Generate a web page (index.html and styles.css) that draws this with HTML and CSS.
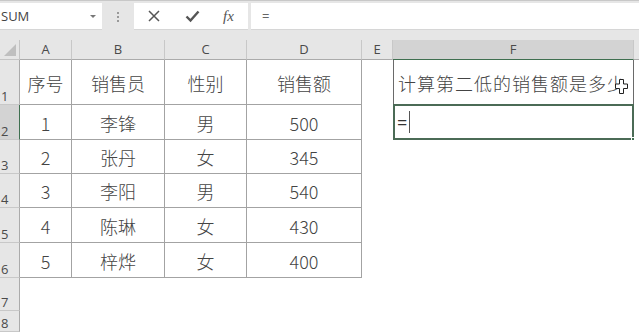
FILE: index.html
```html
<!DOCTYPE html>
<html lang="zh">
<head>
<meta charset="utf-8">
<link rel="stylesheet" href="styles.css">
</head>
<body>
<div class="topbar">
  <div class="namebox"><span class="name">SUM</span><span class="arrow"></span></div>
  <div class="dots"><i></i><i></i><i></i></div>
  <div class="fxbox">
    <svg class="ico" width="14" height="14" viewBox="0 0 14 14"><path d="M2 2 L12 12 M12 2 L2 12" stroke="#555" stroke-width="1.5" fill="none"/></svg>
    <svg class="ico" width="15" height="14" viewBox="0 0 15 14"><path d="M1.5 7.5 L5.5 11.5 L13.5 2.5" stroke="#555" stroke-width="2.4" fill="none"/></svg>
    <span class="fx">fx</span>
  </div>
  <div class="formula">=</div>
</div>
<div class="sheet">
  <div class="corner"><span class="tri"></span></div>
  <div class="ch">A</div><div class="ch">B</div><div class="ch">C</div><div class="ch">D</div><div class="ch">E</div><div class="ch sel">F</div><div class="ch last"></div>

  <div class="rh">1</div>
  <div class="c t">序号</div><div class="c t">销售员</div><div class="c t">性别</div><div class="c t">销售额</div><div class="c"></div>
  <div class="c f1">计算第二低的销售额是多少
    <svg class="cursor" width="13" height="15" viewBox="0 0 13 15"><path d="M4.5 0.5 H8.5 V5 H12.5 V9.5 H8.5 V14.5 H4.5 V9.5 H0.5 V5 H4.5 Z" fill="#fff" stroke="#222" stroke-width="1"/></svg>
  </div><div class="c"></div>

  <div class="rh rsel">2</div>
  <div class="c t">1</div><div class="c t">李锋</div><div class="c t">男</div><div class="c t">500</div><div class="c"></div>
  <div class="c active">=<span class="caret"></span><span class="handle"></span></div><div class="c"></div>

  <div class="rh">3</div>
  <div class="c t">2</div><div class="c t">张丹</div><div class="c t">女</div><div class="c t">345</div><div class="c"></div><div class="c"></div><div class="c"></div>

  <div class="rh">4</div>
  <div class="c t">3</div><div class="c t">李阳</div><div class="c t">男</div><div class="c t">540</div><div class="c"></div><div class="c"></div><div class="c"></div>

  <div class="rh">5</div>
  <div class="c t">4</div><div class="c t">陈琳</div><div class="c t">女</div><div class="c t">430</div><div class="c"></div><div class="c"></div><div class="c"></div>

  <div class="rh">6</div>
  <div class="c t">5</div><div class="c t">梓烨</div><div class="c t">女</div><div class="c t">400</div><div class="c"></div><div class="c"></div><div class="c"></div>

  <div class="rh">7</div>
  <div class="c"></div><div class="c"></div><div class="c"></div><div class="c"></div><div class="c"></div><div class="c"></div><div class="c"></div>

  <div class="rh">8</div>
  <div class="c"></div><div class="c"></div><div class="c"></div><div class="c"></div><div class="c"></div><div class="c"></div><div class="c"></div>
</div>
</body>
</html>
```
FILE: styles.css
```css
* { box-sizing: border-box; }
html, body { margin: 0; padding: 0; }
body {
  width: 639px;
  height: 332px;
  overflow: hidden;
  background: #fff;
  font-family: "Noto Sans CJK SC", "Noto Sans", sans-serif;
  color: #444;
}
.topbar {
  height: 40px;
  background: #e6e6e6;
  border-top: 1px solid #c8c8c8;
  padding-top: 2px;
  display: flex;
  align-items: flex-start;
}
.namebox {
  width: 102px;
  height: 27px;
  background: #fff;
  border-bottom: 1px solid #d6d6d6;
  display: flex;
  align-items: center;
  justify-content: space-between;
  padding: 0 6px 0 1px;
}
.name {
  font-family: "Segoe UI", "Open Sans", sans-serif;
  font-size: 13px;
  color: #444;
}
.arrow {
  width: 0; height: 0;
  border-left: 3px solid transparent;
  border-right: 3px solid transparent;
  border-top: 3px solid #777;
}
.dots {
  width: 32px;
  height: 27px;
  display: flex;
  flex-direction: column;
  align-items: center;
  justify-content: center;
  gap: 2px;
}
.dots i {
  width: 2px; height: 2px;
  background: #999;
  display: block;
}
.fxbox {
  width: 114px;
  height: 27px;
  background: #fff;
  border-bottom: 1px solid #d6d6d6;
  display: flex;
  align-items: center;
  padding-left: 13px;
  gap: 24px;
}
.fx {
  font-family: "Liberation Serif", serif;
  font-style: italic;
  font-size: 15px;
  color: #555;
  margin-left: -1px;
}
.formula {
  margin-left: 3px;
  flex: 1;
  height: 27px;
  background: #fff;
  border-bottom: 1px solid #d6d6d6;
  font-family: "Segoe UI", "Open Sans", sans-serif;
  font-size: 13px;
  color: #666;
  padding-left: 11px;
  line-height: 27px;
}
.sheet {
  display: grid;
  grid-template-columns: 20px 52px 93px 82px 115px 31px 241px 5px;
  grid-template-rows: 20px 45px 35px 34px 34px 35px 35px 33px 21px;
}
.corner {
  background: #e6e6e6;
  border-right: 1px solid #c4c4c4;
  border-bottom: 1px solid #c4c4c4;
  position: relative;
}
.tri {
  position: absolute;
  right: 3px;
  bottom: 3px;
  width: 0; height: 0;
  border-left: 12px solid transparent;
  border-bottom: 12px solid #bfbfbf;
}
.ch {
  background: #e6e6e6;
  border-right: 1px solid #c8c8c8;
  border-bottom: 1px solid #ababab;
  font-family: "Segoe UI", "Open Sans", sans-serif;
  font-size: 13px;
  color: #4a4a4a;
  text-align: center;
  line-height: 19px;
}
.ch.sel {
  background: #d3d3d3;
  border-bottom: 1px solid #3f6f50;
}
.ch.last { border-right: none; }
.rh {
  background: #e6e6e6;
  border-right: 1px solid #ababab;
  border-bottom: 1px solid #c8c8c8;
  font-family: "Segoe UI", "Open Sans", sans-serif;
  font-size: 13px;
  color: #4a4a4a;
  display: flex;
  align-items: flex-end;
  padding-left: 1px;
  line-height: 16px;
}
.rh.rsel {
  background: #d3d3d3;
  border-right: 1px solid #3f6f50;
}
.c {
  background: #fff;
  position: relative;
  font-size: 18px;
  font-weight: 300;
  display: flex;
  align-items: center;
}
.c.t {
  justify-content: center;
  border-right: 1px solid #a3a3a3;
  border-bottom: 1px solid #a3a3a3;
  color: #444;
  padding-top: 1px;
}
.f1 {
  border: 1px solid #6a6a6a;
  border-top: none;
  padding-left: 4px;
  padding-top: 1px;
  letter-spacing: 1px;
  white-space: nowrap;
  overflow: visible;
}
.cursor {
  position: absolute;
  left: 221px;
  top: 19px;
}
.active {
  border: 2px solid #4b6b56;
  margin-top: -1px;
  padding-left: 2px;
  font-family: "Segoe UI", "Open Sans", sans-serif;
  font-size: 18px;
  font-weight: 400;
  color: #333;
}
.caret {
  display: inline-block;
  width: 1px;
  height: 22px;
  background: #555;
  margin-left: 2px;
}
.handle {
  position: absolute;
  right: -4px;
  bottom: -4px;
  width: 5px;
  height: 5px;
  background: #3f6f50;
  border: 1px solid #fff;
}
```
